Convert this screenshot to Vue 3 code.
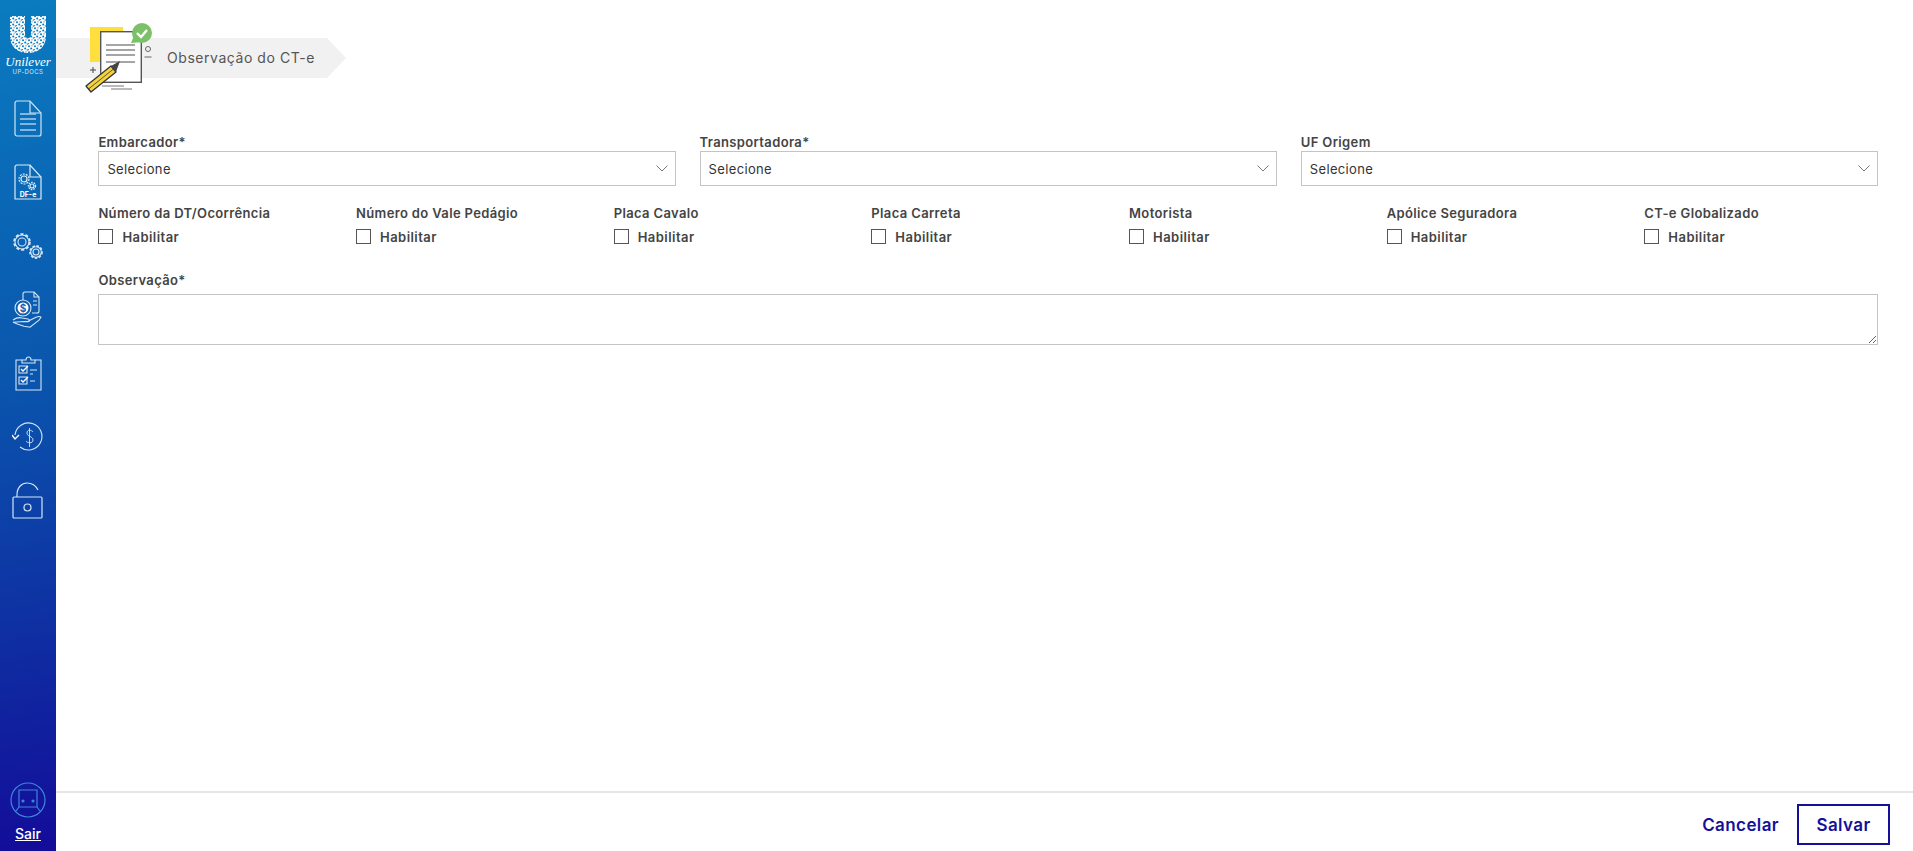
<template>
  <div class="page">
    <aside class="sidebar">
      <div class="brand">
        <svg class="u-logo" width="36" height="38" viewBox="0 0 36 38">
          <defs>
            <pattern id="speckle" width="6" height="6" patternUnits="userSpaceOnUse">
              <rect width="6" height="6" fill="#fff" />
              <circle cx="1" cy="1.2" r="1" fill="#0a78be" />
              <circle cx="4" cy="0.800" r="0.6" fill="#0a78be" />
              <circle cx="3.200" cy="3.400" r="1" fill="#0a78be" />
              <circle cx="0.600" cy="4.600" r="0.6" fill="#0a78be" />
              <circle cx="5.300" cy="5" r="0.7" fill="#0a78be" />
            </pattern>
          </defs>
          <path
            fill="url(#speckle)"
            d="M0 1h15v18c0 3 1 4 3 4s3-1 3-4V1h15v20c0 11-8 17-18 17S0 32 0 21z"
          />
        </svg>
        <span class="brand-name">Unilever</span>
        <span class="brand-sub">UP-DOCS</span>
      </div>

      <nav class="nav">
        <a class="nav-item">
          <svg width="28" height="38" viewBox="0 0 28 38" fill="none" stroke="#cfe4f6" stroke-width="1.2">
            <path d="M3 1h13l11 12v21a2 2 0 0 1-2 2H3a2 2 0 0 1-2-2V3a2 2 0 0 1 2-2z" />
            <path d="M16 1v12h11" />
            <path d="M6 14h16M6 19h16M6 24h16M6 30h16" stroke-width="1.6" stroke="#a9cdeb" />
          </svg>
        </a>
        <a class="nav-item">
          <svg width="28" height="37" viewBox="0 0 28 37" fill="none" stroke="#dcebf8" stroke-width="1.2">
            <path d="M3 1h13l11 12v22H1V3a2 2 0 0 1 2-2z" />
            <path d="M16 1v12h11" />
            <circle cx="10" cy="15" r="3" />
            <circle cx="10" cy="15" r="5" stroke-dasharray="2 1.1" />
            <circle cx="18" cy="22" r="2" />
            <circle cx="18" cy="22" r="3.6" stroke-dasharray="1.6 1" />
            <text x="14" y="33" class="df-text">DF-e</text>
          </svg>
        </a>
        <a class="nav-item">
          <svg width="32" height="30" viewBox="0 0 32 30" fill="none" stroke="#d4e5f5" stroke-width="1.1">
            <circle cx="10" cy="11" r="4" />
            <circle cx="10" cy="11" r="7.8" stroke-width="2" stroke-dasharray="3 2" />
            <circle cx="10" cy="11" r="7" />
            <circle cx="24" cy="21" r="3" />
            <circle cx="24" cy="21" r="6" stroke-width="1.8" stroke-dasharray="2.4 1.6" />
            <circle cx="24" cy="21" r="5.3" />
          </svg>
        </a>
        <a class="nav-item">
          <svg width="32" height="38" viewBox="0 0 32 38" fill="none" stroke="#d4e5f5" stroke-width="1.1">
            <path d="M11 9V3a2 2 0 0 1 2-2h9l5 5v14a2 2 0 0 1-2 2h-5" />
            <path d="M22 1v5h5M21 10h4M21 14h4" />
            <circle cx="11" cy="17" r="8" fill="#0f5eb0" />
            <circle cx="11" cy="17" r="5.5" fill="#fff" stroke="none" />
            <text x="11" y="20.5" class="coin-text">$</text>
            <path d="M1 29c3-2 6-3 9-2l6 1c2 .4 2 2.4 0 2.6l-5 .2m5-.6 8-4c2-.8 4-.8 5 0l-2 3-9 7-6-1-6-2-5-2z" />
          </svg>
        </a>
        <a class="nav-item">
          <svg width="28" height="35" viewBox="0 0 28 35" fill="none" stroke="#d4e5f5" stroke-width="1.1">
            <path d="M8 4H2v30h25V4h-6" />
            <path d="M8 7V4h4c0-4 5-4 5 0h4v3z" />
            <path d="M5 10h8v7H5zM5 21h8v7H5z" />
            <path d="M7 13l2 2 5-5M7 24l2 2 5-5" stroke="#fff" stroke-width="1.3" />
            <path d="M16 14h7M16 25h5M16 18h3" />
          </svg>
        </a>
        <a class="nav-item">
          <svg width="32" height="30" viewBox="0 0 32 30" fill="none" stroke="#d4e5f5" stroke-width="1.1">
            <path d="M3 13A13.5 13.5 0 1 1 8 25" />
            <path d="M0 13l3 4 4-4" stroke="#fff" stroke-width="1.4" />
            <path d="M21 10c-1-2-6-3-6 1 0 4 6 3 6 7 0 4-6 3-7 1M17.500 6v19" stroke-width="0.9" />
          </svg>
        </a>
        <a class="nav-item">
          <svg width="32" height="37" viewBox="0 0 32 37" fill="none" stroke="#d4e5f5" stroke-width="1.2">
            <rect x="1" y="15" width="29" height="21" rx="1" />
            <circle cx="15.500" cy="25.500" r="3.500" />
            <path d="M5 15v-2C5 5 10 1 15 1s9 3 11 7" />
          </svg>
        </a>
      </nav>

      <div class="user">
        <svg width="36" height="36" viewBox="0 0 36 36" fill="none" stroke="#3d86dc" stroke-width="1.2">
          <circle cx="18" cy="18" r="17" />
          <path d="M9 8h18v17H9zM9 25l-3 4M27 25l3 4" />
          <circle cx="13" cy="19" r="1" fill="#3d86dc" />
          <circle cx="23" cy="19" r="1" fill="#3d86dc" />
        </svg>
        <a class="logout">Sair</a>
      </div>
    </aside>

    <main class="main">
      <header class="title-bar">
        <svg class="title-icon" width="72" height="72" viewBox="0 0 72 72">
          <rect x="5" y="4" width="33" height="35" fill="#ffdf3e" />
          <rect x="15.700" y="8.700" width="40.600" height="50.600" fill="#fff" stroke="#555" stroke-width="1.4" />
          <path d="M21 22h29M21 27h29M21 32h29M21 39h29" stroke="#888" stroke-width="1.5" />
          <path d="M8 44v6M5 47h6" stroke="#444" stroke-width="1" />
          <path d="M17 63h22M26 66h21" stroke="#777" stroke-width="1" />
          <path d="M46 20l4-10 8 9z" fill="#7cc16a" />
          <circle cx="57" cy="10" r="10" fill="#7cc16a" />
          <path d="M52 10l4 4 6-7" fill="none" stroke="#fff" stroke-width="2.400" />
          <path d="M1 63L26 43l5 6L6 69z" fill="#f5d33c" stroke="#333" stroke-width="1.300" stroke-linejoin="round" />
          <path d="M3.500 66l25-20" stroke="#333" stroke-width="0.800" />
          <path d="M26 43l9-5-4 11z" fill="#444" />
        </svg>
        <svg class="title-dots" width="10" height="14" viewBox="0 0 10 14" fill="none" stroke="#666" stroke-width="1">
          <circle cx="5" cy="3" r="2.500" />
          <path d="M1.500 11h7" />
        </svg>
        <h1 class="title">Observação do CT-e</h1>
      </header>

      <form class="form" @submit.prevent>
        <div class="selects">
          <div v-for="field in selects" :key="field" class="field">
            <label class="label">{{ field }}</label>
            <div class="select-wrap">
              <select class="select">
                <option>Selecione</option>
              </select>
              <svg class="chevron" width="12" height="7" viewBox="0 0 12 7" fill="none" stroke="#777" stroke-width="1">
                <path d="M0.500 0.500L6 6l5.500-5.500" />
              </svg>
            </div>
          </div>
        </div>

        <div class="toggles">
          <div v-for="toggle in toggles" :key="toggle">
            <div class="label">{{ toggle }}</div>
            <label class="check">
              <input type="checkbox" />
              <span>Habilitar</span>
            </label>
          </div>
        </div>

        <div class="field notes">
          <label class="label">Observação*</label>
          <textarea class="textarea"></textarea>
        </div>
      </form>

      <footer class="footer">
        <button class="btn-link" type="button">Cancelar</button>
        <button class="btn-outline" type="button">Salvar</button>
      </footer>
    </main>
  </div>
</template>

<script setup>
const selects = ["Embarcador*", "Transportadora*", "UF Origem"];
const toggles = [
  "Número da DT/Ocorrência",
  "Número do Vale Pedágio",
  "Placa Cavalo",
  "Placa Carreta",
  "Motorista",
  "Apólice Seguradora",
  "CT-e Globalizado",
];
</script>

<style>
html,
body {
  margin: 0;
  background: #fff;
}
</style>

<style scoped>
.page {
  display: flex;
  height: 851px;
  font-family: Inter, "Open Sans", sans-serif;
  color: #444;
  overflow: hidden;
}
.sidebar {
  width: 56px;
  flex: none;
  display: flex;
  flex-direction: column;
  align-items: center;
  background: linear-gradient(170deg, #0a7cc0 0%, #0a55ad 45%, #130c99 100%);
}
.brand {
  display: flex;
  flex-direction: column;
  align-items: center;
  box-sizing: border-box;
  height: 87px;
  padding-top: 15px;
  color: #fff;
}
.u-logo {
  display: block;
  flex: none;
}
.brand-name {
  font-family: "Liberation Serif", serif;
  font-style: italic;
  font-size: 13px;
  line-height: 13px;
  margin-top: 2px;
}
.brand-sub {
  font-size: 6px;
  line-height: 8px;
  letter-spacing: 0.4px;
  color: #d8e8f5;
}
.nav {
  display: flex;
  flex-direction: column;
  align-items: center;
}
.nav-item {
  display: flex;
  align-items: center;
  justify-content: center;
  height: 63.7px;
}
.df-text {
  font-family: Inter, sans-serif;
  font-size: 7px;
  font-weight: 700;
  fill: #fff;
  stroke: none;
  text-anchor: middle;
}
.coin-text {
  font-family: Inter, sans-serif;
  font-size: 10px;
  font-weight: 700;
  fill: #0f5eb0;
  stroke: none;
  text-anchor: middle;
}
.user {
  margin-top: auto;
  padding-bottom: 9px;
  display: flex;
  flex-direction: column;
  align-items: center;
  gap: 8px;
}
.logout {
  color: #fff;
  font-size: 14px;
  font-weight: 500;
  line-height: 16px;
  text-decoration: underline;
}
.main {
  flex: 1;
  display: flex;
  flex-direction: column;
  min-width: 0;
}
.title-bar {
  position: relative;
  display: flex;
  align-items: center;
  width: fit-content;
  height: 40px;
  margin-top: 38px;
}
.title-bar::before {
  content: "";
  position: absolute;
  inset: 0;
  background: #f1f1f1;
  clip-path: polygon(0 0, 271px 0, 100% 50%, 271px 100%, 0 100%);
}
.title-icon {
  position: absolute;
  left: 29px;
  top: -15px;
}
.title-dots {
  position: absolute;
  left: 87px;
  top: 8px;
}
.title {
  position: relative;
  margin: 0 0 2px;
  padding: 0 31px 0 111px;
  font-size: 14px;
  font-weight: 400;
  letter-spacing: 0.55px;
  color: #555;
}
.form {
  padding: 55px 35px 0 42.4px;
}
.selects {
  display: grid;
  grid-template-columns: repeat(3, 1fr);
  gap: 24px;
}
.field {
  display: flex;
  flex-direction: column;
}
.label {
  display: block;
  font-size: 13px;
  font-weight: 600;
  line-height: 18px;
  letter-spacing: 0.36px;
  color: #444;
}
.select-wrap {
  position: relative;
}
.select {
  display: block;
  width: 100%;
  height: 35px;
  box-sizing: border-box;
  padding: 0 8px;
  border: 1px solid #c4c4c4;
  border-radius: 0;
  background: #fff;
  appearance: none;
  font: inherit;
  font-size: 13px;
  letter-spacing: 0.35px;
  color: #333;
}
.chevron {
  position: absolute;
  right: 8px;
  top: 14px;
}
.toggles {
  display: grid;
  grid-template-columns: repeat(7, 1fr);
  gap: 24px;
  margin-top: 18px;
}
.check {
  display: flex;
  align-items: center;
  gap: 9px;
  margin-top: 7px;
  font-size: 13px;
  font-weight: 600;
  line-height: 15px;
  letter-spacing: 0.45px;
}
.check span {
  position: relative;
  top: 0.5px;
}
.check input {
  appearance: none;
  width: 15px;
  height: 15px;
  margin: 0;
  border: 1px solid #555;
  background: #fff;
}
.notes {
  margin-top: 27px;
  gap: 5px;
}
.textarea {
  display: block;
  width: 100%;
  height: 51px;
  box-sizing: border-box;
  border: 1px solid #c4c4c4;
  border-radius: 0;
  padding: 8px;
  font: inherit;
  outline: none;
}
.footer {
  margin-top: auto;
  display: flex;
  align-items: center;
  justify-content: flex-end;
  gap: 18px;
  padding: 11px 23px 6px 0;
  border-top: 2px solid #e6e6e6;
}
.btn-link,
.btn-outline {
  font: inherit;
  font-size: 17px;
  font-weight: 600;
  letter-spacing: 0.4px;
  color: #14109a;
  background: none;
  cursor: pointer;
}
.btn-link {
  border: 0;
  padding: 0;
}
.btn-outline {
  width: 93px;
  height: 41px;
  border: 2px solid #14109a;
}
</style>
